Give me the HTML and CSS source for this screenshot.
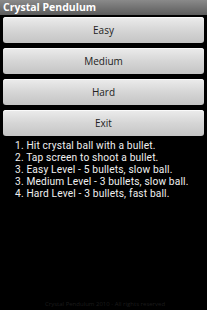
FILE: index.html
```html
<!DOCTYPE html>
<html lang="en">
<head>
  <meta charset="UTF-8">
  <title>Crystal Pendulum</title>
  <link rel="stylesheet" href="styles.css">
</head>
<body>
  <div class="titlebar">Crystal Pendulum</div>
  <div class="menu">
    <button class="btn">Easy</button>
    <button class="btn">Medium</button>
    <button class="btn">Hard</button>
    <button class="btn">Exit</button>
  </div>
  <p class="rules">1. Hit crystal ball with a bullet.<br>
    2. Tap screen to shoot a bullet.<br>
    3. Easy Level - 5 bullets, slow ball.<br>
    3. Medium Level - 3 bullets, slow ball.<br>
    4. Hard Level - 3 bullets, fast ball.</p>
  <div class="footer">Crystal Pendulum 2010 - All rights reserved</div>
</body>
</html>
```
FILE: styles.css
```css
html, body {
  margin: 0;
  padding: 0;
  background: #000;
  height: 310px;
  overflow: hidden;
}
body {
  font-family: 'Open Sans', 'DejaVu Sans', sans-serif;
  color: #eee;
  display: flex;
  flex-direction: column;
}
.titlebar {
  height: 15px;
  line-height: 15px;
  padding-left: 3px;
  background: linear-gradient(#8a8a8a, #5c5c5c);
  color: #fff;
  font-weight: bold;
  font-size: 10.5px;
}
.menu {
  display: flex;
  flex-direction: column;
  gap: 5px;
  padding: 2px 3px 0 3px;
}
.btn {
  height: 26px;
  border: none;
  border-radius: 3px;
  background: linear-gradient(#ececec, #d6d6d6 50%, #c4c4c4);
  box-shadow: inset 0 1px 0 #fafafa;
  color: #222;
  font-family: 'Open Sans', 'DejaVu Sans', sans-serif;
  font-size: 10px;
  padding: 0;
}
.rules {
  margin: 0;
  padding: 4px 0 0 15px;
  font-family: Roboto, 'Open Sans', sans-serif;
  font-size: 10.2px;
  letter-spacing: 0.15px;
  line-height: 12px;
  color: #f0f0f0;
}
.footer {
  margin-top: auto;
  padding: 0 0 2px 45px;
  font-size: 6px;
  color: #1c1c1c;
  white-space: nowrap;
}
```
